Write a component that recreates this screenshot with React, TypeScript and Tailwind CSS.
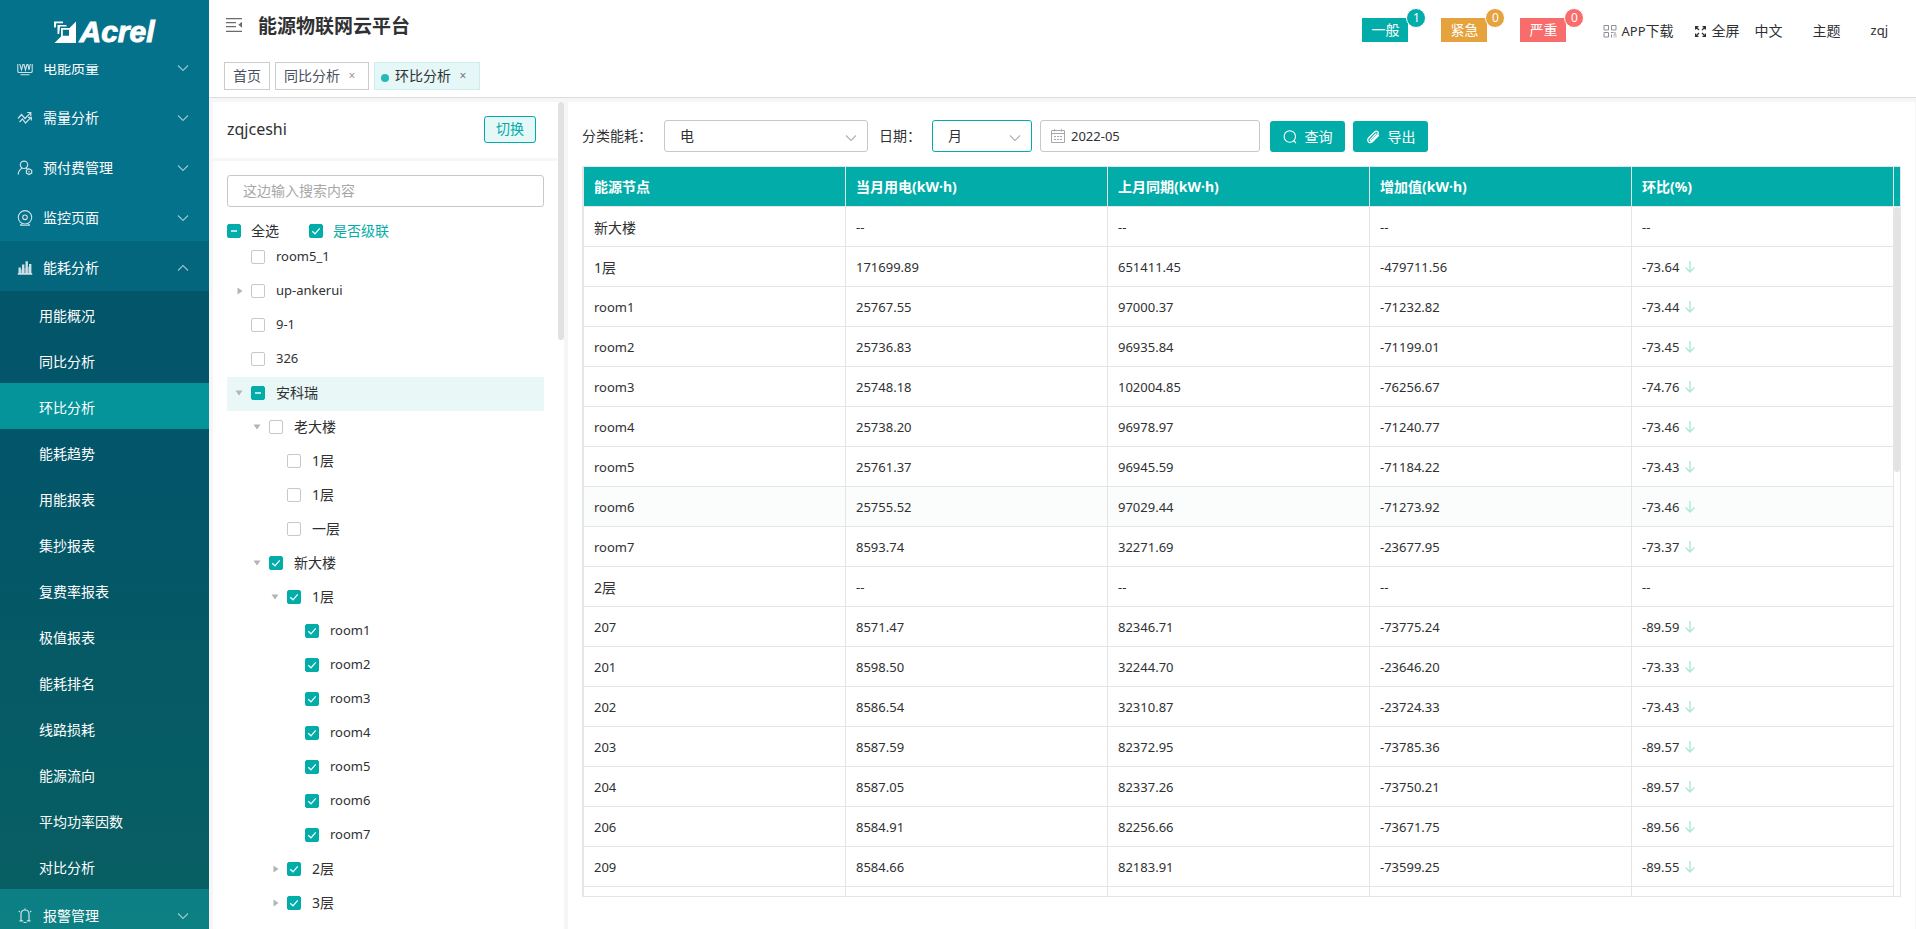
import { useEffect, useRef, useState } from "react";
import type { ReactNode } from "react";
import clsx from "clsx";

interface TreeNode {
  id: string;
  label: string;
  level: 0 | 1 | 2 | 3;
  arrow?: "open" | "closed";
  state?: "checked" | "mixed";
  active?: boolean;
}

const SUB_MENU = [
  "用能概况",
  "同比分析",
  "环比分析",
  "能耗趋势",
  "用能报表",
  "集抄报表",
  "复费率报表",
  "极值报表",
  "能耗排名",
  "线路损耗",
  "能源流向",
  "平均功率因数",
  "对比分析",
];

const TREE: TreeNode[] = [
  { id: "r51", label: "room5_1", level: 0 },
  { id: "up", label: "up-ankerui", level: 0, arrow: "closed" },
  { id: "n91", label: "9-1", level: 0 },
  { id: "n326", label: "326", level: 0 },
  { id: "akr", label: "安科瑞", level: 0, arrow: "open", state: "mixed", active: true },
  { id: "old", label: "老大楼", level: 1, arrow: "open" },
  { id: "old1", label: "1层", level: 2 },
  { id: "old2", label: "1层", level: 2 },
  { id: "old3", label: "一层", level: 2 },
  { id: "new", label: "新大楼", level: 1, arrow: "open", state: "checked" },
  { id: "new1", label: "1层", level: 2, arrow: "open", state: "checked" },
  { id: "room1", label: "room1", level: 3, state: "checked" },
  { id: "room2", label: "room2", level: 3, state: "checked" },
  { id: "room3", label: "room3", level: 3, state: "checked" },
  { id: "room4", label: "room4", level: 3, state: "checked" },
  { id: "room5", label: "room5", level: 3, state: "checked" },
  { id: "room6", label: "room6", level: 3, state: "checked" },
  { id: "room7", label: "room7", level: 3, state: "checked" },
  { id: "new2", label: "2层", level: 2, arrow: "closed", state: "checked" },
  { id: "new3", label: "3层", level: 2, arrow: "closed", state: "checked" },
];

const INDENT = ["pl-[10px]", "pl-[28px]", "pl-[46px]", "pl-[64px]"];

const COLUMNS = ["能源节点", "当月用电(kW·h)", "上月同期(kW·h)", "增加值(kW·h)", "环比(%)"];

const ROWS = [
  ["新大楼", "--", "--", "--", "--"],
  ["1层", "171699.89", "651411.45", "-479711.56", "-73.64"],
  ["room1", "25767.55", "97000.37", "-71232.82", "-73.44"],
  ["room2", "25736.83", "96935.84", "-71199.01", "-73.45"],
  ["room3", "25748.18", "102004.85", "-76256.67", "-74.76"],
  ["room4", "25738.20", "96978.97", "-71240.77", "-73.46"],
  ["room5", "25761.37", "96945.59", "-71184.22", "-73.43"],
  ["room6", "25755.52", "97029.44", "-71273.92", "-73.46"],
  ["room7", "8593.74", "32271.69", "-23677.95", "-73.37"],
  ["2层", "--", "--", "--", "--"],
  ["207", "8571.47", "82346.71", "-73775.24", "-89.59"],
  ["201", "8598.50", "32244.70", "-23646.20", "-73.33"],
  ["202", "8586.54", "32310.87", "-23724.33", "-73.43"],
  ["203", "8587.59", "82372.95", "-73785.36", "-89.57"],
  ["204", "8587.05", "82337.26", "-73750.21", "-89.57"],
  ["206", "8584.91", "82256.66", "-73671.75", "-89.56"],
  ["209", "8584.66", "82183.91", "-73599.25", "-89.55"],
];

const HOVER_ROW = 7;

// Latin-only strings are set one size smaller so they sit evenly beside the Chinese ones
const textSize = (s: string) => (/^[\x20-\x7e]+$/.test(s) ? "text-[13px]" : "text-sm");

function Chevron({ className, up }: { className?: string; up?: boolean }) {
  return (
    <svg viewBox="0 0 12 8" className={clsx("w-3 h-2", className)} fill="none" stroke="currentColor" strokeWidth="1.1">
      <path d={up ? "M1 6.5 6 1.5 11 6.5" : "M1 1.5 6 6.5 11 1.5"} />
    </svg>
  );
}

function Logo() {
  return (
    <div className="h-16 shrink-0 flex items-center justify-center gap-[3px] text-white">
      <svg viewBox="0 0 22 22" className="w-[22px] h-[22px]">
        <path d="M0 .5h9v1.8H2.2l-.4 4.2H0z" fill="#fff" />
        <path d="M3.5 4h9v1.6H6L5.2 13H3.5z" fill="#fff" />
        <path fillRule="evenodd" d="M7 7h8.500L22 .5V22H.5L7 15.500zM8.800 8.800v5.900h6.200V8.800z" fill="#fff" />
      </svg>
      <span className="font-['Liberation_Sans',sans-serif] text-[30px] leading-8 font-bold italic [-webkit-text-stroke:1px_#fff]">
        Acrel
      </span>
    </div>
  );
}

function QualityIcon() {
  return (
    <svg viewBox="0 0 16 16" className="w-4 h-4" fill="none" stroke="currentColor" strokeWidth="1.100">
      <path d="M.8 1v10.200q0 1.300 1.300 1.300h11.800q1.300 0 1.300-1.300V1M3.500 14.800h9" />
      <path d="M2.500 3 4.500 10 6.500 2.500 8.500 10 10.500 2.500 12 10l1.500-7" />
    </svg>
  );
}

function DemandIcon() {
  return (
    <svg viewBox="0 0 16 16" className="w-4 h-4" fill="none" stroke="currentColor" strokeWidth="1.200">
      <path d="M1 8.500 4.500 4.500l3.500 4 5.500-5.700M10.200 2.500h3.600v3.400" />
      <path d="M2.500 12l3-3 3 4 5.500-5.700M11 7.300h3.300v3.300" />
    </svg>
  );
}

function PrepayIcon() {
  return (
    <svg viewBox="0 0 16 16" className="w-4 h-4" fill="none" stroke="currentColor" strokeWidth="1.200">
      <circle cx="7" cy="4.800" r="3.700" />
      <path d="M1.200 14.500C1.400 11 3 9.300 5 8.300M9 8l1.500 1.200" />
      <path d="M12 8.800l2.700 1.500v2.800L12 14.600l-2.600-1.500v-2.800zM12 11v1.500" />
    </svg>
  );
}

function CameraIcon() {
  return (
    <svg viewBox="0 0 16 16" className="w-4 h-4" fill="none" stroke="currentColor" strokeWidth="1.100">
      <circle cx="8" cy="7.300" r="6.700" />
      <circle cx="8" cy="7.300" r="2.300" />
      <path d="M3.500 15.400q0-1.400 2-1.600M12.500 15.400q0-1.400-2-1.600M3 15.300h10" />
    </svg>
  );
}

function EnergyIcon() {
  return (
    <svg viewBox="0 0 16 16" className="w-4 h-4" fill="currentColor">
      <path d="M.8 13h14.400v1.800H.8zM1.500 7.500h2.400V13H1.500zM5 4.500h2.400V13H5zM8.500 1.200h2.400V13H8.500zM12 4h2.400v9H12z" />
      <path d="M3.900 9.500H5V13H3.900zM7.400 8h1.100v5H7.400zM10.900 7H12v6h-1.100z" opacity=".6" />
    </svg>
  );
}

function AlarmIcon() {
  return (
    <svg viewBox="0 0 16 16" className="w-4 h-4" fill="none" stroke="currentColor" strokeWidth="1.200">
      <path d="M4 12.500V6q0-4 4-4t4 4v6.500M2.500 12.800h3.700M9.800 12.800h3.700M6.500 14.500h3M8 .5V2M2.700 4 1.800 3M13.300 4l.9-1" />
    </svg>
  );
}

function MenuItem({ icon, label, open }: { icon: ReactNode; label: string; open?: boolean }) {
  return (
    <button
      type="button"
      className={clsx(
        "w-full h-[50px] pt-1 pl-[17px] pr-5 flex items-center text-white text-sm",
        open && "bg-black/10"
      )}
    >
      <span className="opacity-80">{icon}</span>
      <span className="ml-2.5 flex-1 text-left">{label}</span>
      <Chevron up={open} className="w-2.5 opacity-60" />
    </button>
  );
}

function Sidebar() {
  return (
    <aside className="w-[209px] shrink-0 flex flex-col overflow-hidden bg-linear-to-b from-[#05728c] from-50% to-[#0c8083]">
      <Logo />
      <div className="flex-1 min-h-0 overflow-hidden">
        <nav className="-mt-[23px]">
          <MenuItem icon={<QualityIcon />} label="电能质量" />
          <MenuItem icon={<DemandIcon />} label="需量分析" />
          <MenuItem icon={<PrepayIcon />} label="预付费管理" />
          <MenuItem icon={<CameraIcon />} label="监控页面" />
          <MenuItem icon={<EnergyIcon />} label="能耗分析" open />
          <ul className="bg-black/25">
            {SUB_MENU.map((item) => (
              <li key={item}>
                <a
                  href="#"
                  className={clsx(
                    "h-[46px] pl-[39px] pt-1 flex items-center text-sm text-white",
                    item === "环比分析" && "bg-[#04949a]"
                  )}
                >
                  {item}
                </a>
              </li>
            ))}
          </ul>
          <MenuItem icon={<AlarmIcon />} label="报警管理" />
        </nav>
      </div>
    </aside>
  );
}

function AlarmTag({ label, count, color }: { label: string; count: number; color: string }) {
  return (
    <button type="button" className={clsx("relative w-[46px] h-6 text-sm leading-6 text-white", color)}>
      {label}
      <sup
        className={clsx(
          "absolute -top-2.5 -right-[18px] w-5 h-5 rounded-full border border-white text-xs leading-[18px] text-center",
          color
        )}
      >
        {count}
      </sup>
    </button>
  );
}

function Header() {
  return (
    <header className="h-[98px] shrink-0 border-b border-[#d8dce5] bg-white">
      <div className="h-[52px] flex">
        <button type="button" aria-label="收起菜单" className="mt-[17px] ml-[17px] w-4 h-4 text-[#6b6b6b]">
          <svg viewBox="0 0 16 16" className="w-4 h-4" fill="none" stroke="currentColor" strokeWidth="1.300">
            <path d="M0 1.700h16M0 5.700h10M0 9.700h10M0 14.300h16" />
            <path d="M16 4.700v6l-3.700-3z" fill="currentColor" stroke="none" />
          </svg>
        </button>
        <h1 className="ml-4 mt-3 text-[19px] leading-7 font-bold text-[#303133]">能源物联网云平台</h1>
        <div className="ml-auto mt-[18px] pr-7 flex items-start text-[#303133]">
          <div className="flex gap-[33px]">
            <AlarmTag label="一般" count={1} color="bg-[#02ada9]" />
            <AlarmTag label="紧急" count={0} color="bg-[#e6a23c]" />
            <AlarmTag label="严重" count={0} color="bg-[#f86c6b]" />
          </div>
          <a href="#" className="ml-[37px] h-[26px] flex items-center gap-1 text-sm">
            <svg viewBox="0 0 14 14" className="w-[14px] h-[14px] text-[#8a8f96]" fill="none" stroke="currentColor">
              <path d="M1 1.500h4.500V6H1zM8.500 1.500H13V6H8.500zM1 8.500h4.500V13H1zM8 8.500h2.500M12 8v2M8.500 10.500v3M10.500 11h3M10.500 13h1M13 12.500v1" />
            </svg>
            <span>
              <span className="text-[13px]">APP</span>下载
            </span>
          </a>
          <button type="button" className="ml-[21px] h-[26px] flex items-center gap-1.5 text-sm">
            <svg viewBox="0 0 11 11" className="w-[11px] h-[11px]" fill="none" stroke="currentColor" strokeWidth="1.200">
              <path d="M.6 3.500V.6h2.900M7.500.6h2.900v2.900M10.400 7.500v2.900H7.500M3.500 10.400H.6V7.500M1 1l3 3M10 1 7 4M10 10 7 7M1 10l3-3" />
            </svg>
            全屏
          </button>
          <button type="button" className="ml-[15px] h-[26px] text-sm">中文</button>
          <button type="button" className="ml-[30px] h-[26px] text-sm">主题</button>
          <button type="button" className="ml-[30px] h-[26px] text-[13px]">zqj</button>
        </div>
      </div>
      <div className="pt-[10px] pl-[15px] flex gap-[5px] text-sm leading-[26px] text-[#495060]">
        <a href="#" className="h-7 px-2 border border-[#ccc]">首页</a>
        <a href="#" className="h-7 px-2 border border-[#ccc] flex items-center">
          同比分析
          <span className="w-5 pl-1 text-center text-xs text-[#999]">×</span>
        </a>
        <a href="#" className="h-7 px-2 border border-[#ccefee] bg-[#e5f7f6] text-[#303133] flex items-center">
          <span className="w-2 h-2 -ml-0.5 mt-1 mr-1.5 rounded-full bg-[#26b9b5]" />
          环比分析
          <span className="w-5 pl-1 text-center text-xs text-[#778]">×</span>
        </a>
      </div>
    </header>
  );
}

function Check({ id, state }: { id: string; state?: "checked" | "mixed" }) {
  const ref = useRef<HTMLInputElement>(null);

  useEffect(() => {
    if (ref.current) ref.current.indeterminate = state === "mixed";
  }, [state]);

  return (
    <span className="grid w-3.5 h-3.5 shrink-0">
      <input
        ref={ref}
        id={id}
        type="checkbox"
        defaultChecked={state === "checked"}
        className="peer col-start-1 row-start-1 appearance-none w-3.5 h-3.5 rounded-xs border border-[#c8c8c8] bg-white checked:bg-[#02ada9] checked:border-[#02ada9] indeterminate:bg-[#02ada9] indeterminate:border-[#02ada9]"
      />
      <svg
        viewBox="0 0 14 14"
        className="col-start-1 row-start-1 pointer-events-none invisible peer-checked:visible"
        fill="none"
        stroke="#fff"
        strokeWidth="1.200"
      >
        <path d="M3.200 7.200 6 9.800 10.700 4.300" />
      </svg>
      <span className="col-start-1 row-start-1 place-self-center pointer-events-none invisible peer-indeterminate:visible w-1.5 h-0.5 bg-white/70" />
    </span>
  );
}

function TreeRow({ node }: { node: TreeNode }) {
  return (
    <li className={clsx("h-[34px] pb-0.5 flex items-center", INDENT[node.level], node.active && "bg-[#e9f7f7]")}>
      <span className="w-[14px] shrink-0">
        {node.arrow && (
          <svg
            viewBox="0 0 8 8"
            className={clsx("w-2 h-2", node.arrow === "open" && "-ml-0.5 mt-0.5 rotate-90")}
            fill="#b4b4b4"
          >
            <path d="M.5 .5 5.500 4 .5 7.500z" />
          </svg>
        )}
      </span>
      <Check id={node.id} state={node.state} />
      <label htmlFor={node.id} className={clsx("ml-[11px] text-[#303133]", textSize(node.label))}>
        {node.label}
      </label>
    </li>
  );
}

function NodePanel() {
  return (
    <section className="w-[351px] shrink-0 flex">
      <div className="flex-1 flex flex-col gap-[3px] overflow-hidden">
        <div className="h-14 shrink-0 pl-3.5 pr-[22px] pb-0.5 flex items-center justify-between bg-white">
          <span className="text-base text-[#303133]">zqjceshi</span>
          <button
            type="button"
            className="w-[52px] h-[27px] rounded-[3px] border border-[#02ada9] bg-[#e5f7f6] text-sm text-[#02ada9]"
          >
            切换
          </button>
        </div>
        <div className="flex-1 min-h-0 px-3.5 pt-3.5 bg-white overflow-hidden">
          <input
            type="text"
            aria-label="搜索"
            placeholder="这边输入搜索内容"
            className="block w-full h-8 px-[15px] pb-0.5 rounded-[3px] border border-[#c8c8c8] text-sm placeholder:text-[#a8a8a8] focus:outline-none focus:border-[#02ada9]"
          />
          <div className="h-[34px] pt-3.5 flex items-center text-sm">
            <Check id="all" state="mixed" />
            <label htmlFor="all" className="ml-2.5 text-[#303133]">全选</label>
            <span className="w-[30px]" />
            <Check id="cascade" state="checked" />
            <label htmlFor="cascade" className="ml-2.5 text-[#02ada9]">是否级联</label>
          </div>
          <ul>
            {TREE.map((node) => (
              <TreeRow key={node.id} node={node} />
            ))}
          </ul>
        </div>
      </div>
      {/* scroll track */}
      <div className="w-[6px] bg-white">
        <div className="h-[238px] rounded-[3px] bg-[#e1e1e1]" />
      </div>
    </section>
  );
}

interface PickProps {
  id: string;
  options: string[];
  value: string;
  onChange: (v: string) => void;
  className: string;
}

function Pick({ id, options, value, onChange, className }: PickProps) {
  return (
    <span className="grid items-center">
      <select
        id={id}
        value={value}
        onChange={(e) => onChange(e.target.value)}
        className={clsx(
          "col-start-1 row-start-1 h-8 pl-[15px] pr-8 rounded-[3px] border bg-white appearance-none text-sm focus:outline-none",
          className
        )}
      >
        {options.map((o) => (
          <option key={o}>{o}</option>
        ))}
      </select>
      <Chevron className="col-start-1 row-start-1 justify-self-end mr-[11px] mt-1 pointer-events-none text-[#b0b0b0]" />
    </span>
  );
}

function Toolbar() {
  const [kind, setKind] = useState("电");
  const [unit, setUnit] = useState("月");
  const [month, setMonth] = useState("2022-05");

  return (
    <form className="flex items-center text-sm text-[#303133]" onSubmit={(e) => e.preventDefault()}>
      <label htmlFor="kind" className="w-[82px]">分类能耗：</label>
      <Pick id="kind" options={["电", "水", "气"]} value={kind} onChange={setKind} className="w-[204px] border-[#c8c8c8]" />
      <label htmlFor="unit" className="ml-[11px] w-[53px]">日期：</label>
      <Pick id="unit" options={["日", "月", "年"]} value={unit} onChange={setUnit} className="w-[100px] border-[#02ada9]" />
      <span className="ml-2 w-[220px] h-8 pl-2.5 flex items-center gap-1.5 rounded-[3px] border border-[#c8c8c8]">
        <svg viewBox="0 0 14 14" className="w-3.5 h-3.5 text-[#a8a8a8]" fill="none" stroke="currentColor">
          <path d="M.5 1.500h13v12H.5zM.5 4.500h13M3.500 0v2.500M10.500 0v2.500M3 7.500h2M6 7.500h2M9 7.500h2M3 10.500h2M6 10.500h2M9 10.500h2" />
        </svg>
        <input
          type="text"
          aria-label="月份"
          value={month}
          onChange={(e) => setMonth(e.target.value)}
          className="w-40 text-[13px] focus:outline-none"
        />
      </span>
      <button type="submit" className="mt-px ml-2.5 w-[75px] h-[31px] flex items-center justify-center gap-2 rounded-[3px] bg-[#02ada9] text-white">
        <svg viewBox="0 0 14 14" className="w-3.5 h-3.5" fill="none" stroke="currentColor" strokeWidth="1.100">
          <circle cx="6.800" cy="6.500" r="5.700" />
          <path d="M10.500 10.500 13 13" />
        </svg>
        查询
      </button>
      <button type="button" className="mt-px ml-2 w-[75px] h-[31px] flex items-center justify-center gap-2 rounded-[3px] bg-[#02ada9] text-white">
        <svg viewBox="0 0 14 14" className="w-3.5 h-3.5" fill="none" stroke="currentColor" strokeWidth="1.300" strokeLinecap="round">
          <path d="M10 3.800 4.500 9.600q-.6.900.1 1.300.6.300 1.200-.3L11.600 4.600q1.300-1.700.1-2.900-1.400-1.200-3 .2L2.600 8q-1.700 2-.1 3.900 1.900 1.500 3.800-.1L12.500 5.500" />
        </svg>
        导出
      </button>
    </form>
  );
}

function DataTable() {
  return (
    <div className="mt-3.5 mb-8 flex-1 min-h-0 flex overflow-hidden border border-l-2 border-[#e5e5e5]">
      <table className="flex-1 table-fixed w-full h-fit border-separate border-spacing-0 text-left text-[#303133]">
        <thead>
          <tr>
            {COLUMNS.map((c) => (
              <th key={c} className="h-10 px-2.5 border-b border-r border-[#e5e5e5] bg-[#02ada9] text-sm font-bold text-white">
                {c}
              </th>
            ))}
          </tr>
        </thead>
        <tbody>
          {ROWS.map((row, i) => (
            <tr key={row[0] + i} className={clsx(i === HOVER_ROW && "bg-[#fafdfc]")}>
              {row.map((cell, j) => (
                <td key={j} className={clsx("h-10 px-2.5 pt-0.5 border-b border-r border-[#e5e5e5]", textSize(cell))}>
                  {cell}
                  {j === 4 && cell !== "--" && (
                    <svg viewBox="0 0 10 12" className="inline ml-1.5 w-2.5 h-3 align-[-1px]" fill="none" stroke="#b0e8d8" strokeWidth="1.400">
                      <path d="M5 0v11M.6 6.500 5 11l4.400-4.500" />
                    </svg>
                  )}
                </td>
              ))}
            </tr>
          ))}
          <tr>
            {COLUMNS.map((c) => (
              <td key={c} className="h-10 border-r border-[#e5e5e5]" />
            ))}
          </tr>
        </tbody>
      </table>
      <div className="w-[6px] shrink-0">
        <div className="h-10 bg-[#02ada9] border-b border-[#e5e5e5]" />
        <div className="h-[265px] rounded-[3px] bg-[#e3e3e3]" />
      </div>
    </div>
  );
}

export default function App() {
  return (
    <div className="h-screen flex overflow-hidden font-['Noto_Sans','Noto_Sans_CJK_SC',sans-serif]">
      <Sidebar />
      <div className="flex-1 min-w-0 flex flex-col">
        <Header />
        <main className="flex-1 min-h-0 pt-1 pl-1 pr-px flex gap-1 bg-[#f6f6f6]">
          <NodePanel />
          <section className="flex-1 min-w-0 pt-[18px] pl-3.5 pr-3.5 flex flex-col bg-white">
            <Toolbar />
            <DataTable />
          </section>
        </main>
      </div>
    </div>
  );
}
